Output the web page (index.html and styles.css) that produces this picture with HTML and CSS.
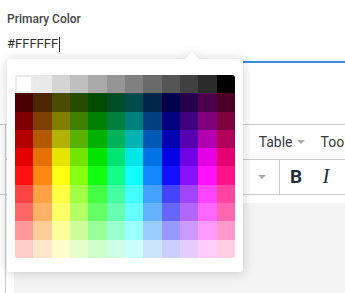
FILE: index.html
```html
<!DOCTYPE html>
<html lang="en">
<head>
<meta charset="utf-8">
<title>Primary Color</title>
<link rel="stylesheet" href="styles.css">
</head>
<body>
<div class="field">
  <div class="field-label">Primary Color</div>
  <div class="field-input"><span class="value">#FFFFFF</span><span class="caret"></span></div>

  <div class="picker">
    <div class="swatches">
      <div class="swatch current" style="background:#ffffff"></div><div class="swatch" style="background:#e9e9e9"></div><div class="swatch" style="background:#d4d4d4"></div><div class="swatch" style="background:#bfbfbf"></div><div class="swatch" style="background:#aaaaaa"></div><div class="swatch" style="background:#959595"></div><div class="swatch" style="background:#808080"></div><div class="swatch" style="background:#6a6a6a"></div><div class="swatch" style="background:#555555"></div><div class="swatch" style="background:#404040"></div><div class="swatch" style="background:#2b2b2b"></div><div class="swatch" style="background:#000000"></div>
      <div class="swatch" style="background:#4c0000"></div><div class="swatch" style="background:#4c2600"></div><div class="swatch" style="background:#4c4c00"></div><div class="swatch" style="background:#264c00"></div><div class="swatch" style="background:#004c00"></div><div class="swatch" style="background:#004c26"></div><div class="swatch" style="background:#004c4c"></div><div class="swatch" style="background:#00264c"></div><div class="swatch" style="background:#00004c"></div><div class="swatch" style="background:#26004c"></div><div class="swatch" style="background:#4c004c"></div><div class="swatch" style="background:#4c0026"></div>
      <div class="swatch" style="background:#7f0000"></div><div class="swatch" style="background:#7f3f00"></div><div class="swatch" style="background:#7f7f00"></div><div class="swatch" style="background:#3f7f00"></div><div class="swatch" style="background:#007f00"></div><div class="swatch" style="background:#007f3f"></div><div class="swatch" style="background:#007f7f"></div><div class="swatch" style="background:#003f7f"></div><div class="swatch" style="background:#00007f"></div><div class="swatch" style="background:#3f007f"></div><div class="swatch" style="background:#7f007f"></div><div class="swatch" style="background:#7f003f"></div>
      <div class="swatch" style="background:#b20000"></div><div class="swatch" style="background:#b25900"></div><div class="swatch" style="background:#b2b200"></div><div class="swatch" style="background:#59b200"></div><div class="swatch" style="background:#00b200"></div><div class="swatch" style="background:#00b259"></div><div class="swatch" style="background:#00b2b2"></div><div class="swatch" style="background:#0059b2"></div><div class="swatch" style="background:#0000b2"></div><div class="swatch" style="background:#5900b2"></div><div class="swatch" style="background:#b200b2"></div><div class="swatch" style="background:#b20059"></div>
      <div class="swatch" style="background:#e50000"></div><div class="swatch" style="background:#e57200"></div><div class="swatch" style="background:#e5e500"></div><div class="swatch" style="background:#72e500"></div><div class="swatch" style="background:#00e500"></div><div class="swatch" style="background:#00e572"></div><div class="swatch" style="background:#00e5e5"></div><div class="swatch" style="background:#0072e5"></div><div class="swatch" style="background:#0000e5"></div><div class="swatch" style="background:#7200e5"></div><div class="swatch" style="background:#e500e5"></div><div class="swatch" style="background:#e50072"></div>
      <div class="swatch" style="background:#ff1111"></div><div class="swatch" style="background:#ff8811"></div><div class="swatch" style="background:#ffff11"></div><div class="swatch" style="background:#88ff11"></div><div class="swatch" style="background:#11ff11"></div><div class="swatch" style="background:#11ff88"></div><div class="swatch" style="background:#11ffff"></div><div class="swatch" style="background:#1188ff"></div><div class="swatch" style="background:#1111ff"></div><div class="swatch" style="background:#8811ff"></div><div class="swatch" style="background:#ff11ff"></div><div class="swatch" style="background:#ff1188"></div>
      <div class="swatch" style="background:#ff4444"></div><div class="swatch" style="background:#ffa144"></div><div class="swatch" style="background:#ffff44"></div><div class="swatch" style="background:#a1ff44"></div><div class="swatch" style="background:#44ff44"></div><div class="swatch" style="background:#44ffa1"></div><div class="swatch" style="background:#44ffff"></div><div class="swatch" style="background:#44a1ff"></div><div class="swatch" style="background:#4444ff"></div><div class="swatch" style="background:#a144ff"></div><div class="swatch" style="background:#ff44ff"></div><div class="swatch" style="background:#ff44a1"></div>
      <div class="swatch" style="background:#ff6666"></div><div class="swatch" style="background:#ffb266"></div><div class="swatch" style="background:#ffff66"></div><div class="swatch" style="background:#b2ff66"></div><div class="swatch" style="background:#66ff66"></div><div class="swatch" style="background:#66ffb2"></div><div class="swatch" style="background:#66ffff"></div><div class="swatch" style="background:#66b2ff"></div><div class="swatch" style="background:#6666ff"></div><div class="swatch" style="background:#b266ff"></div><div class="swatch" style="background:#ff66ff"></div><div class="swatch" style="background:#ff66b2"></div>
      <div class="swatch" style="background:#ff9999"></div><div class="swatch" style="background:#ffcc99"></div><div class="swatch" style="background:#ffff99"></div><div class="swatch" style="background:#ccff99"></div><div class="swatch" style="background:#99ff99"></div><div class="swatch" style="background:#99ffcc"></div><div class="swatch" style="background:#99ffff"></div><div class="swatch" style="background:#99ccff"></div><div class="swatch" style="background:#9999ff"></div><div class="swatch" style="background:#cc99ff"></div><div class="swatch" style="background:#ff99ff"></div><div class="swatch" style="background:#ff99cc"></div>
      <div class="swatch" style="background:#ffcccc"></div><div class="swatch" style="background:#ffe5cc"></div><div class="swatch" style="background:#ffffcc"></div><div class="swatch" style="background:#e5ffcc"></div><div class="swatch" style="background:#ccffcc"></div><div class="swatch" style="background:#ccffe5"></div><div class="swatch" style="background:#ccffff"></div><div class="swatch" style="background:#cce5ff"></div><div class="swatch" style="background:#ccccff"></div><div class="swatch" style="background:#e5ccff"></div><div class="swatch" style="background:#ffccff"></div><div class="swatch" style="background:#ffcce5"></div>
    </div>
  </div>
</div>

<div class="editor">
  <div class="editor-head">
    <div class="head-inner">
      <div class="menubar">
        <div class="menu-item">Edit<svg class="chev" viewBox="0 0 8 4"><polygon points="0,0 8,0 4,4"/></svg></div>
        <div class="menu-item">View<svg class="chev" viewBox="0 0 8 4"><polygon points="0,0 8,0 4,4"/></svg></div>
        <div class="menu-item">Insert<svg class="chev" viewBox="0 0 8 4"><polygon points="0,0 8,0 4,4"/></svg></div>
        <div class="menu-item">Format<svg class="chev" viewBox="0 0 8 4"><polygon points="0,0 8,0 4,4"/></svg></div>
        <div class="menu-item">Table<svg class="chev" viewBox="0 0 8 4"><polygon points="0,0 8,0 4,4"/></svg></div>
        <div class="menu-item">Tools<svg class="chev" viewBox="0 0 8 4"><polygon points="0,0 8,0 4,4"/></svg></div>
      </div>
      <div class="toolbar">
        <div class="tgroup history">
          <div class="tbtn"><svg class="ticon" viewBox="0 0 24 24"><path d="M6 9h8a5 5 0 010 10h-3" fill="none" stroke="#222f3e" stroke-width="2"/><path d="M9 5L5 9l4 4" fill="none" stroke="#222f3e" stroke-width="2"/></svg></div>
          <div class="tbtn"><svg class="ticon" viewBox="0 0 24 24"><path d="M18 9h-8a5 5 0 000 10h3" fill="none" stroke="#222f3e" stroke-width="2"/><path d="M15 5l4 4-4 4" fill="none" stroke="#222f3e" stroke-width="2"/></svg></div>
        </div>
        <div class="tgroup blocks">
          <span class="block-name">Paragraph</span>
          <svg class="chev" viewBox="0 0 8 4"><polygon points="0,0 8,0 4,4"/></svg>
        </div>
        <div class="tgroup format">
          <div class="tbtn bold">B</div>
          <div class="tbtn italic">I</div>
        </div>
      </div>
    </div>
  </div>
  <div class="editor-body">
    <div class="body-inner">
      <div class="doc"></div>
    </div>
  </div>
</div>
</body>
</html>
```

FILE: styles.css
```css
* {
  box-sizing: border-box;
}

html, body {
  margin: 0;
  background: #ffffff;
}

body {
  font-family: Roboto, "Liberation Sans", sans-serif;
  color: #333333;
  overflow: hidden;
}

.field {
  position: relative;
  padding: 11px 0 0 7px;
}

.field-label {
  font-size: 12px;
  line-height: 16px;
  font-weight: 500;
  color: #454545;
  margin-bottom: 1px;
}

.field-input {
  display: flex;
  align-items: center;
  font-size: 13px;
  line-height: 20px;
  color: #333333;
  padding: 6px 0 7px;
  border-bottom: 2px solid #3b8fd6;
}

.caret {
  width: 1px;
  height: 15px;
  margin-left: 1px;
  background: #333333;
}

.picker {
  position: absolute;
  left: 7px;
  top: 59px;
  width: 236px;
  padding: 16px 8px 14px;
  background: #ffffff;
  border-radius: 3px;
  filter: drop-shadow(0 1px 6px rgba(0, 0, 0, 0.18));
  z-index: 5;
}

.picker::before {
  content: "";
  position: absolute;
  top: -7px;
  left: 178px;
  border: 7px solid transparent;
  border-top: 0;
  border-bottom-color: #ffffff;
}

.swatches {
  display: grid;
  grid-template-columns: repeat(12, 1fr);
  grid-auto-rows: 18.3px;
  border-radius: 3px;
  overflow: hidden;
}

.swatch.current {
  box-shadow: inset 0 0 0 2px #ececec;
}

.editor {
  margin-top: 61px;
  border-top: 1px solid #cccccc;
}

.editor-head {
  padding-left: 5px;
  border-bottom: 1px solid #cccccc;
}

.head-inner {
  border-left: 1px solid #cccccc;
}

.menubar {
  display: flex;
  align-items: center;
  height: 35px;
  border-bottom: 1px solid #cccccc;
  font-size: 14px;
  color: #3a3a3a;
  white-space: nowrap;
  overflow: hidden;
}

.menu-item {
  display: flex;
  align-items: center;
  gap: 4px;
  padding: 0 8px;
  flex: none;
}

.menu-item:first-child {
  padding-left: 6px;
}

.chev {
  width: 8px;
  height: 4px;
  fill: #a8a8a8;
  flex: none;
}

.toolbar {
  display: flex;
  height: 34px;
  white-space: nowrap;
}

.tgroup {
  display: flex;
  align-items: center;
  border-right: 1px solid #cccccc;
  flex: none;
}

.tgroup.history {
  padding: 0 4px;
}

.tgroup.history .tbtn {
  width: 34px;
}

.ticon {
  width: 20px;
  height: 20px;
}

.tgroup.blocks {
  width: 197px;
  justify-content: space-between;
  padding: 0 13px 0 10px;
  font-size: 14px;
  color: #3a3a3a;
}

.tgroup.format {
  border-right: 0;
  padding-left: 1px;
}

.tbtn {
  display: flex;
  align-items: center;
  justify-content: center;
  width: 30px;
  height: 100%;
  padding-bottom: 2px;
  color: #222f3e;
}

.tbtn.bold {
  font-family: Roboto, "Liberation Sans", sans-serif;
  font-weight: 700;
  font-size: 19px;
}

.tbtn.italic {
  font-family: "Liberation Serif", serif;
  font-style: italic;
  font-size: 21px;
}

.editor-body {
  padding-left: 5px;
}

.body-inner {
  border-left: 1px solid #cccccc;
  padding: 8px 0 0 8px;
}

.doc {
  height: 90px;
  background: #f4f4f4;
}
```
